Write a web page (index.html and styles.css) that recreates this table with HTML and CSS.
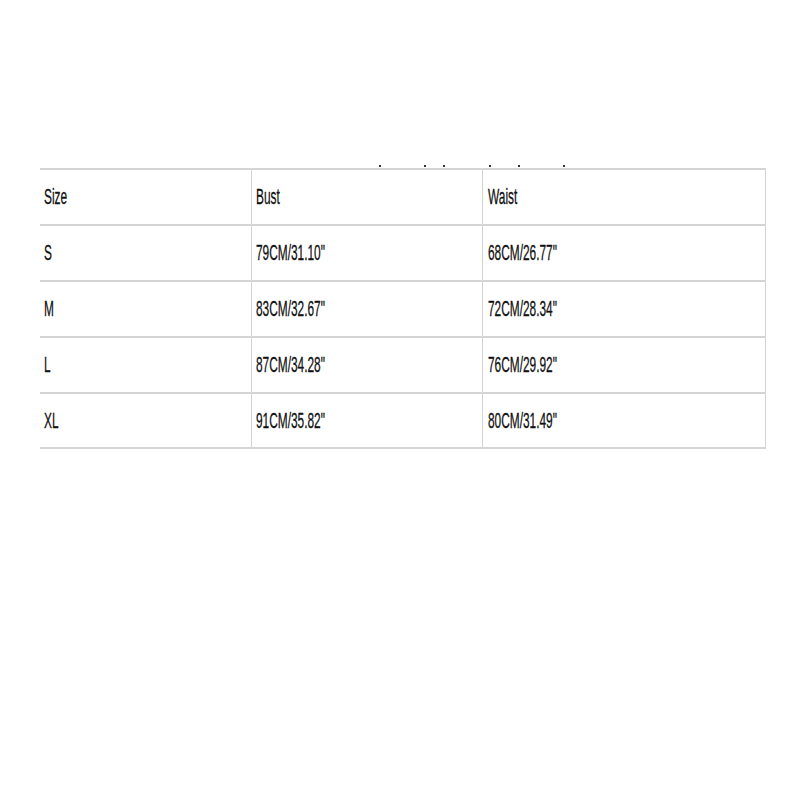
FILE: index.html
```html
<!DOCTYPE html>
<html>
<head>
<meta charset="utf-8">
<link rel="stylesheet" href="styles.css">
</head>
<body>
<div class="wrap">
  <div class="marks">
    <i class="dot" style="left:339px"></i>
    <i class="dot" style="left:384px"></i>
    <i class="dot" style="left:403px"></i>
    <i class="dot" style="left:449px"></i>
    <i class="dot" style="left:478px"></i>
    <i class="dot" style="left:523px"></i>
  </div>
  <div class="table">
    <div class="row">
      <div class="cell"><span class="t">Size</span></div>
      <div class="cell"><span class="t">Bust</span></div>
      <div class="cell last"><span class="t">Waist</span></div>
    </div>
    <div class="row">
      <div class="cell"><span class="t">S</span></div>
      <div class="cell"><span class="t">79CM/31.10"</span></div>
      <div class="cell last"><span class="t">68CM/26.77"</span></div>
    </div>
    <div class="row">
      <div class="cell"><span class="t">M</span></div>
      <div class="cell"><span class="t">83CM/32.67"</span></div>
      <div class="cell last"><span class="t">72CM/28.34"</span></div>
    </div>
    <div class="row">
      <div class="cell"><span class="t">L</span></div>
      <div class="cell"><span class="t">87CM/34.28"</span></div>
      <div class="cell last"><span class="t">76CM/29.92"</span></div>
    </div>
    <div class="row end">
      <div class="cell"><span class="t">XL</span></div>
      <div class="cell"><span class="t">91CM/35.82"</span></div>
      <div class="cell last"><span class="t">80CM/31.49"</span></div>
    </div>
  </div>
</div>
</body>
</html>
```
FILE: styles.css
```css
html, body {
  margin: 0;
  padding: 0;
  background: #ffffff;
}
body {
  font-family: "Liberation Sans", Arial, sans-serif;
  color: #111111;
}
.wrap {
  position: relative;
  margin: 168px 0 0 40px;
  width: 726px;
}
.marks {
  position: absolute;
  left: 0;
  top: -3px;
  width: 100%;
  height: 3px;
}
.dot {
  position: absolute;
  top: 0;
  width: 2px;
  height: 2px;
  background: #333;
}
.table {
  display: flex;
  flex-direction: column;
}
.row {
  display: grid;
  grid-template-columns: 212px 231px 283px;
  height: 56px;
  border-top: 2px solid #d5d5d5;
  box-sizing: border-box;
}
.row.end {
  height: 57px;
  border-bottom: 2px solid #d5d5d5;
}
.cell {
  display: flex;
  align-items: center;
  padding-left: 4px;
  border-right: 1px solid #d3d3d3;
  overflow: hidden;
}
.cell:first-child {
  padding-left: 4px;
}
.cell.last {
  padding-left: 5px;
}
.t {
  display: inline-block;
  font-size: 22px;
  white-space: nowrap;
  transform: scaleX(0.54);
  transform-origin: left center;
  -webkit-text-stroke: 0.3px #111;
}
```
